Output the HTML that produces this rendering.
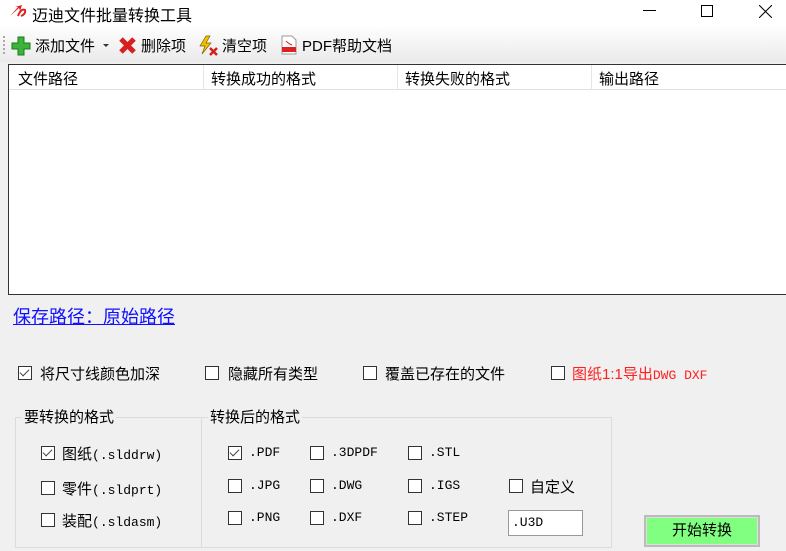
<!DOCTYPE html>
<html><head><meta charset="utf-8"><style>
*{margin:0;padding:0;box-sizing:border-box}
body{width:786px;height:551px;background:#f0f0f0;position:relative;overflow:hidden;font-family:"Liberation Sans","Noto Sans CJK SC",sans-serif;color:#000}
.a{position:absolute;white-space:nowrap}
.cb{position:absolute;width:14px;height:14px;border:1px solid #333;background:#fff}
.cb.on::after{content:"";position:absolute;left:3px;top:0px;width:4px;height:8px;border:solid #444;border-width:0 1.5px 1.5px 0;transform:rotate(45deg)}
.t{font-size:15px}
.m{font-family:"Liberation Mono","Noto Sans CJK SC",monospace;font-size:13px}
</style></head><body>
<div class="a" style="left:0;top:0;width:786px;height:28px;background:#fff"></div>
<svg class="a" style="left:9px;top:4px" width="18" height="14" viewBox="0 0 18 14"><path d="M1 12 L9 3 L6 3 L13 1 L11 7 L10 4 Z" fill="#e02020"/><path d="M9 12 Q12 4 16 6 Q17 10 12 12" stroke="#e02020" stroke-width="2" fill="none"/></svg>
<div class="a" style="left:32px;top:2px;font-size:16px">迈迪文件批量转换工具</div>
<div class="a" style="left:643px;top:10px;width:13px;height:1px;background:#000"></div>
<div class="a" style="left:701px;top:5px;width:12px;height:12px;border:1px solid #000"></div>
<svg class="a" style="left:759px;top:5px" width="13" height="13"><path d="M0 0L13 13M13 0L0 13" stroke="#000"/></svg>
<div class="a" style="left:0;top:28px;width:786px;height:34px;background:linear-gradient(#fdfdfd,#eaeaea)"></div>
<div class="a" style="left:3px;top:36px;width:2px;height:18px;border-left:2px dotted #aaa"></div>
<svg class="a" style="left:11px;top:36px" width="20" height="20"><path d="M7 1h6v6h6v6h-6v6h-6v-6h-6v-6h6z" fill="#3cb43c" stroke="#1a7a1a"/></svg>
<div class="a" style="left:35px;top:35px;font-size:15px">添加文件</div>
<div class="a" style="left:103px;top:44px;border:3px solid transparent;border-top:3px solid #333"></div>
<svg class="a" style="left:118px;top:36px" width="19" height="19"><path d="M3 3L16 16M16 3L3 16" stroke="#d82020" stroke-width="5"/></svg>
<div class="a" style="left:141px;top:35px;font-size:15px">删除项</div>
<svg class="a" style="left:198px;top:35px" width="22" height="21"><path d="M8 1L2 11h5l-3 8 9-11H8l4-7z" fill="#f0c000" stroke="#806000" stroke-width=".7"/><path d="M12 13l7 7M19 13l-7 7" stroke="#d02020" stroke-width="2.5"/></svg>
<div class="a" style="left:222px;top:35px;font-size:15px">清空项</div>
<svg class="a" style="left:280px;top:35px" width="18" height="20"><path d="M2 1h10l4 4v14H2z" fill="#fff" stroke="#999"/><rect x="2" y="12" width="14" height="5" fill="#e02020"/><path d="M6 6q3 3 6 4" stroke="#e02020" fill="none"/></svg>
<div class="a" style="left:302px;top:35px;font-size:15px">PDF帮助文档</div>
<div class="a" style="left:8px;top:64px;width:778px;height:231px;border:1px solid #333;border-right:none;background:#fff"></div>
<div class="a" style="left:9px;top:65px;width:777px;height:25px;border-bottom:1px solid #e0e0e0"></div>
<div class="a" style="left:203px;top:65px;width:1px;height:25px;background:#e5e5e5"></div>
<div class="a" style="left:397px;top:65px;width:1px;height:25px;background:#e5e5e5"></div>
<div class="a" style="left:591px;top:65px;width:1px;height:25px;background:#e5e5e5"></div>
<div class="a t" style="left:18px;top:68px">文件路径</div>
<div class="a t" style="left:211px;top:68px">转换成功的格式</div>
<div class="a t" style="left:405px;top:68px">转换失败的格式</div>
<div class="a t" style="left:599px;top:68px">输出路径</div>
<div class="a" style="left:13px;top:303px;font-size:18px;color:#1010ff;text-decoration:underline">保存路径：原始路径</div>
<div class="cb on" style="left:18px;top:366px"></div><div class="a t" style="left:40px;top:363px">将尺寸线颜色加深</div>
<div class="cb" style="left:205px;top:366px"></div><div class="a t" style="left:228px;top:363px">隐藏所有类型</div>
<div class="cb" style="left:363px;top:366px"></div><div class="a t" style="left:385px;top:363px">覆盖已存在的文件</div>
<div class="cb" style="left:551px;top:366px"></div><div class="a t" style="left:572px;top:363px;color:#ff2020">图纸1:1导出<span style="font-family:'Liberation Mono',monospace;font-size:13px">DWG DXF</span></div>
<div class="a" style="left:15px;top:417px;width:187px;height:131px;border:1px solid #dcdcdc"></div>
<div class="a" style="left:201px;top:417px;width:411px;height:131px;border:1px solid #dcdcdc"></div>
<div class="a t" style="left:22px;top:406px;background:#f0f0f0;padding:0 2px">要转换的格式</div>
<div class="a t" style="left:208px;top:406px;background:#f0f0f0;padding:0 2px">转换后的格式</div>
<div class="cb on" style="left:41px;top:446px"></div><div class="a" style="left:62px;top:443px"><span class="t">图纸</span><span class="m">(.slddrw)</span></div>
<div class="cb" style="left:41px;top:481px"></div><div class="a" style="left:62px;top:478px"><span class="t">零件</span><span class="m">(.sldprt)</span></div>
<div class="cb" style="left:41px;top:513px"></div><div class="a" style="left:62px;top:510px"><span class="t">装配</span><span class="m">(.sldasm)</span></div>
<div class="cb on" style="left:228px;top:446px"></div><div class="a m" style="left:249px;top:445px">.PDF</div>
<div class="cb" style="left:310px;top:446px"></div><div class="a m" style="left:331px;top:445px">.3DPDF</div>
<div class="cb" style="left:408px;top:446px"></div><div class="a m" style="left:429px;top:445px">.STL</div>
<div class="cb" style="left:228px;top:479px"></div><div class="a m" style="left:249px;top:478px">.JPG</div>
<div class="cb" style="left:310px;top:479px"></div><div class="a m" style="left:331px;top:478px">.DWG</div>
<div class="cb" style="left:408px;top:479px"></div><div class="a m" style="left:429px;top:478px">.IGS</div>
<div class="cb" style="left:509px;top:479px"></div><div class="a t" style="left:530px;top:476px">自定义</div>
<div class="cb" style="left:228px;top:511px"></div><div class="a m" style="left:249px;top:510px">.PNG</div>
<div class="cb" style="left:310px;top:511px"></div><div class="a m" style="left:331px;top:510px">.DXF</div>
<div class="cb" style="left:408px;top:511px"></div><div class="a m" style="left:429px;top:510px">.STEP</div>
<div class="a m" style="left:508px;top:510px;width:75px;height:26px;border:1px solid #999;background:#fff;padding:4px 3px">.U3D</div>
<div class="a" style="left:644px;top:515px;width:116px;height:32px;border:2px solid #bbb;background:#80ff80;font-size:15px;text-align:center;line-height:27px;outline:1px solid #ddd;outline-offset:-3px">开始转换</div>
</body></html>
